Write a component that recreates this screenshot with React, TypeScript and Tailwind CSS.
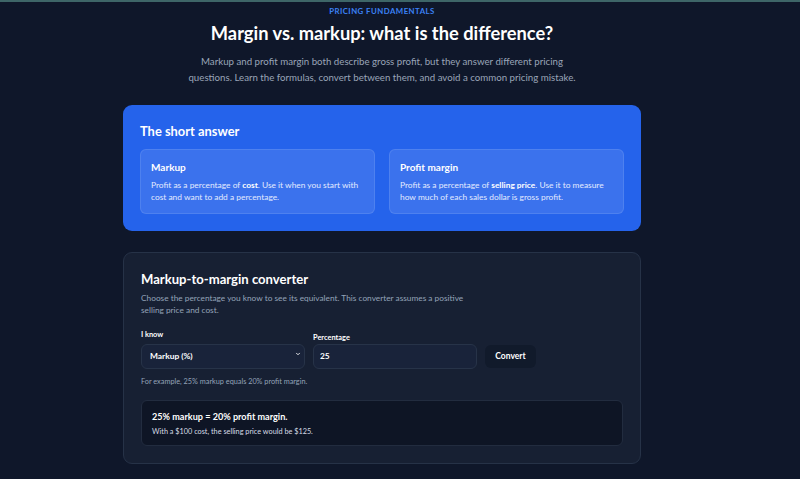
import React, { useState } from 'react';
import { ChevronDown } from 'lucide-react';

const App: React.FC = () => {
  const [mode, setMode] = useState('markup');
  const [value, setValue] = useState('25');

  return (
    <div
      className="min-h-screen bg-[#0f172a] text-white border-t-2 border-[#3e6668]"
      style={{ fontFamily: 'Lato, "Open Sans", sans-serif' }}
    >
      <div className="pr-[36px]">
        <div className="mx-auto w-[518px] pt-[3px] pb-[16px]">
          <header className="text-center">
            <p className="text-[7.8px] font-bold tracking-[0.06em] text-[#3b82f6] uppercase leading-[12px]">
              Pricing Fundamentals
            </p>
            <h1 className="mt-[4px] text-[18.3px] font-bold leading-[24px]">
              Margin vs. markup: what is the difference?
            </h1>
            <p className="mx-auto mt-[8px] w-[440px] text-[9.7px] leading-[16px] text-[#9aa5b8]">
              Markup and profit margin both describe gross profit, but they answer different pricing
              <br />
              questions. Learn the formulas, convert between them, and avoid a common pricing mistake.
            </p>
          </header>

          <section className="mt-[20px] rounded-[9px] bg-[#2563eb] px-[17px] pt-[16px] pb-[17px]">
            <h2 className="text-[12.9px] font-bold leading-[20px]">The short answer</h2>
            <div className="mt-[8px] grid grid-cols-2 gap-[14px]">
              <div className="rounded-[6px] border border-white/10 bg-white/10 px-[10px] pt-[9px] pb-[10px]">
                <h3 className="text-[10px] font-bold leading-[16px]">Markup</h3>
                <p className="mt-[4px] text-[8.4px] leading-[12px] text-[#e3ebff]">
                  Profit as a percentage of <strong className="font-bold text-white">cost</strong>. Use it when you start with
                  cost and want to add a percentage.
                </p>
              </div>
              <div className="rounded-[6px] border border-white/10 bg-white/10 px-[10px] pt-[9px] pb-[10px]">
                <h3 className="text-[10px] font-bold leading-[16px]">Profit margin</h3>
                <p className="mt-[4px] text-[8.4px] leading-[12px] text-[#e3ebff]">
                  Profit as a percentage of <strong className="font-bold text-white">selling price</strong>. Use it to measure
                  how much of each sales dollar is gross profit.
                </p>
              </div>
            </div>
          </section>

          <section className="mt-[21px] rounded-[9px] border border-[#263247] bg-[#172033] px-[17px] pt-[16px] pb-[17px]">
            <h2 className="text-[13.1px] font-bold leading-[20px]">Markup-to-margin converter</h2>
            <p className="mt-[3px] w-[340px] text-[8.3px] leading-[12px] text-[#94a3b8]">
              Choose the percentage you know to see its equivalent. This converter assumes a positive
              selling price and cost.
            </p>

            <div className="mt-[13px] flex items-end gap-[8px]">
              <label className="flex w-[164px] flex-col gap-[1px]">
                <span className="text-[7.4px] font-bold leading-[11px]">I know</span>
                <div className="relative">
                  <select
                    value={mode}
                    onChange={e => setMode(e.target.value)}
                    className="h-[25px] w-full appearance-none rounded-[6px] border border-[#273348] bg-[#19233a] pl-[8px] text-[8.4px] font-bold text-white outline-none"
                  >
                    <option value="markup">Markup (%)</option>
                    <option value="margin">Profit margin (%)</option>
                  </select>
                  <ChevronDown className="pointer-events-none absolute right-[4px] top-[10px] h-[6px] w-[6px] text-white" strokeWidth={3.5} />
                </div>
              </label>
              <label className="flex w-[164px] flex-col gap-[1px]">
                <span className="text-[7.4px] font-bold leading-[11px]">Percentage</span>
                <input
                  type="text"
                  value={value}
                  onChange={e => setValue(e.target.value)}
                  className="h-[25px] w-full rounded-[6px] border border-[#273348] bg-[#19233a] px-[6px] text-[8.4px] font-bold text-white outline-none"
                />
              </label>
              <button className="mb-[1px] h-[23px] w-[51px] rounded-[6px] bg-[#111a2b] text-[8.5px] font-bold text-white">
                Convert
              </button>
            </div>

            <p className="mt-[7px] text-[7.3px] leading-[11px] text-[#94a3b8]">
              For example, 25% markup equals 20% profit margin.
            </p>

            <div className="mt-[13px] rounded-[6px] border border-[#222c3f] bg-[#0e1525] px-[10px] pt-[9px] pb-[8px]">
              <p className="text-[9.1px] font-bold leading-[14px]">25% markup = 20% profit margin.</p>
              <p className="mt-[2px] text-[7.3px] leading-[11px] text-[#d6dce6]">
                With a $100 cost, the selling price would be $125.
              </p>
            </div>
          </section>
        </div>
      </div>
    </div>
  );
};

export default App;
